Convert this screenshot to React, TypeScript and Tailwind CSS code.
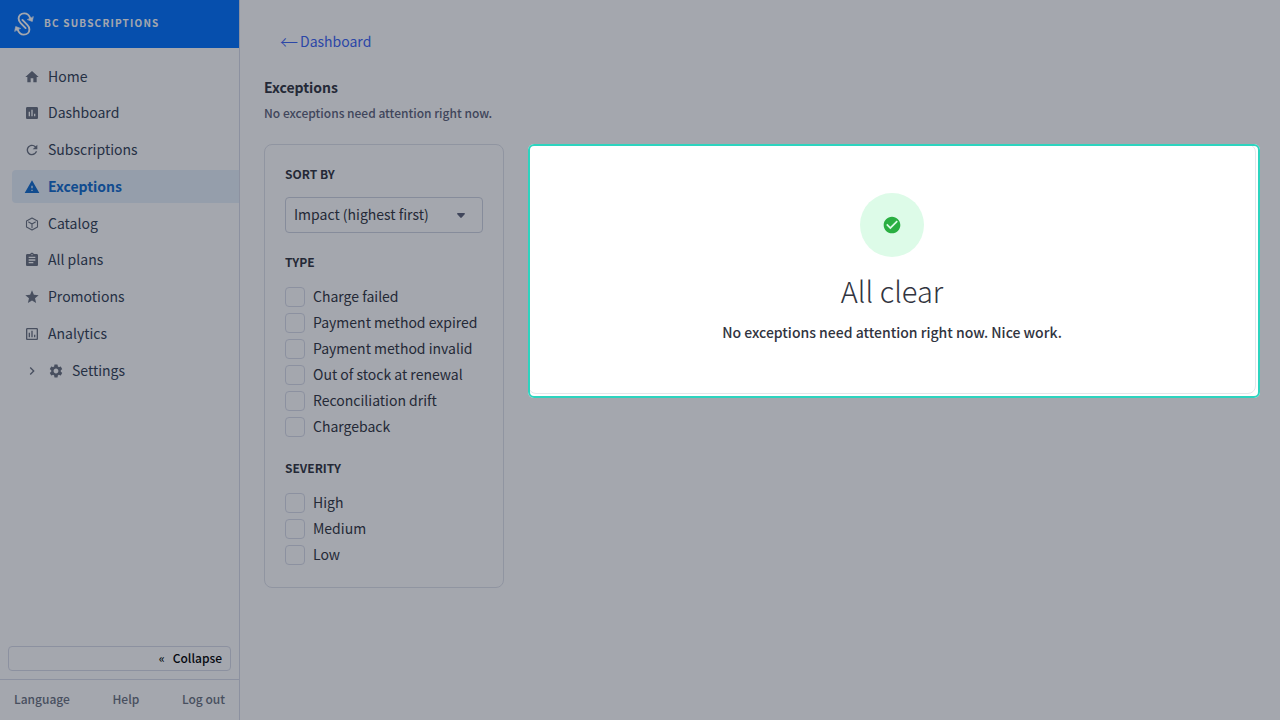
import type { ReactNode } from "react";
import {
  MdAssessment,
  MdAssignment,
  MdCheckCircle,
  MdChevronRight,
  MdHome,
  MdOutlineAssessment,
  MdRefresh,
  MdSettings,
  MdStar,
  MdWarning,
} from "react-icons/md";

function CubeIcon() {
  return (
    <svg viewBox="0 0 16 16" className="size-4" fill="none" stroke="currentColor" strokeWidth="1.100" strokeLinejoin="round" strokeLinecap="round" aria-hidden="true">
      <path d="M8 2 13.500 4.900v6.200L8 14 2.500 11.100V4.900zM4.600 6 8 7.900 11.400 6M8 7.900v3.900" />
    </svg>
  );
}

function CaretIcon() {
  return (
    <svg viewBox="0 0 8 5" className="pointer-events-none absolute top-4 right-[18px] h-[5px] w-2 text-[#5e637a]" fill="currentColor" aria-hidden="true">
      <path d="M.8 0h6.400c.7 0 1 .8.500 1.300L4.700 4.600c-.4.400-1 .4-1.400 0L.3 1.300C-.2.800.1 0 .8 0z" />
    </svg>
  );
}

function Logo() {
  return (
    <svg viewBox="0 0 24 28" className="h-7 w-6" fill="none" stroke="currentColor" strokeWidth="1.900" strokeLinecap="round" strokeLinejoin="round" aria-hidden="true">
      <path d="M18.300 8.500C17.300 5.200 15 3.400 12.200 3.400 8.900 3.400 6.600 5.700 6.600 8.600c0 2 .8 3.200 2.100 4.500l4.900 5" />
      <path d="M5.700 19.500C6.700 22.800 9 24.600 11.800 24.600c3.300 0 5.600-2.300 5.600-5.200 0-2-.8-3.200-2.100-4.500l-4.900-5" />
      <path d="m21.300 6.900-1 4.600-4.700-1.800zM2.700 21.100l1-4.600 4.700 1.800z" fill="currentColor" strokeWidth=".6" />
    </svg>
  );
}

type NavEntry = { label: string; icon: ReactNode; active?: boolean; nested?: boolean };

const nav: NavEntry[] = [
  { label: "Home", icon: <MdHome className="size-4" /> },
  { label: "Dashboard", icon: <MdAssessment className="size-4" /> },
  { label: "Subscriptions", icon: <MdRefresh className="size-4" /> },
  { label: "Exceptions", icon: <MdWarning className="size-4" />, active: true },
  { label: "Catalog", icon: <CubeIcon /> },
  { label: "All plans", icon: <MdAssignment className="size-4" /> },
  { label: "Promotions", icon: <MdStar className="size-4" /> },
  { label: "Analytics", icon: <MdOutlineAssessment className="size-4" /> },
  { label: "Settings", icon: <MdSettings className="size-4" />, nested: true },
];

const types = [
  "Charge failed",
  "Payment method expired",
  "Payment method invalid",
  "Out of stock at renewal",
  "Reconciliation drift",
  "Chargeback",
];
const severities = ["High", "Medium", "Low"];

function CheckGroup({ title, options }: { title: string; options: string[] }) {
  return (
    <fieldset className="pb-0.5">
      <legend className="pb-0.5 text-xs leading-[18px] font-bold uppercase">{title}</legend>
      <div className="mt-3.5 flex flex-col gap-1.5">
        {options.map((option) => (
          <label key={option} className="flex items-center gap-2 text-sm leading-[18px] whitespace-nowrap">
            <input type="checkbox" className="size-5 shrink-0 appearance-none rounded border border-[#d9dce9] bg-white checked:bg-[#3c64f4]" />
            <span className="pb-0.5">{option}</span>
          </label>
        ))}
      </div>
    </fieldset>
  );
}

export default function App() {
  return (
    <div className="flex min-h-screen overflow-hidden bg-white font-['Noto_Sans_CJK_SC',sans-serif] text-[#313440]">
      <aside className="flex w-60 shrink-0 flex-col border-r border-[#d9dce9]">
        <header className="flex h-12 items-center gap-2 bg-[#0071fd] px-3 text-white">
          <Logo />
          <span className="pb-0.5 text-[10px] leading-4 font-bold tracking-[0.12em]">BC SUBSCRIPTIONS</span>
        </header>
        <nav className="flex h-[339px] flex-col justify-between pt-3 pl-3">
          {nav.map(({ label, icon, active, nested }) => (
            <a
              key={label}
              href="#"
              className={
                active
                  ? "flex h-[33px] items-center gap-2 rounded-l bg-[#e7f1fb] px-3 text-sm font-bold text-[#126cce]"
                  : "flex h-[33px] items-center gap-2 rounded-l px-3 text-sm text-[#334155]"
              }
            >
              {nested && <MdChevronRight className="size-4 text-[#6b7280]" />}
              <span className={active ? "" : "text-[#6b7280]"}>{icon}</span>
              <span className="pb-0.5">{label}</span>
            </a>
          ))}
        </nav>
        <div className="mt-auto p-2">
          <button type="button" className="flex h-[25px] w-full items-center justify-end gap-2 rounded border border-[#d9dce9] px-2 pb-0.5 text-xs leading-5 font-medium text-black">
            <span>«</span>
            Collapse
          </button>
        </div>
        <footer className="flex h-[41px] items-center justify-between border-t border-[#d9dce9] px-3.5 pb-0.5 text-xs font-medium text-[#6b7280]">
          <a href="#">Language</a>
          <a href="#">Help</a>
          <a href="#">Log out</a>
        </footer>
      </aside>

      <main className="min-w-0 grow px-6 pt-6">
        <a href="#" className="inline-flex h-9 items-center gap-0.5 px-4 pb-0.5 text-sm text-[#3c64f4]">
          <span className="text-lg leading-5 font-light">←</span>
          <span>Dashboard</span>
        </a>
        <h1 className="mt-[15px] text-sm leading-6 font-bold">Exceptions</h1>
        <p className="mt-1 text-xs leading-5 font-medium text-[#5e637a]">No exceptions need attention right now.</p>
        <div className="mt-[21px] flex items-start gap-6">
          <section className="flex w-60 shrink-0 flex-col gap-5 rounded-lg border border-[#dfe2ea] p-5">
            <div>
              <label htmlFor="sort" className="block pb-0.5 text-xs leading-[18px] font-bold uppercase">Sort by</label>
              <div className="relative mt-3">
                <select id="sort" className="block h-9 w-full appearance-none rounded border border-[#cfd3e0] bg-white px-2 pb-0.5 text-sm">
                  <option>Impact (highest first)</option>
                </select>
                <CaretIcon />
              </div>
            </div>
            <CheckGroup title="Type" options={types} />
            <CheckGroup title="Severity" options={severities} />
          </section>
          <section className="relative flex min-w-0 grow flex-col items-center rounded-lg border border-[#e5e7eb] px-5 pt-12 pb-[49px] text-center">
            <span className="pointer-events-none absolute -top-px -right-[5px] -bottom-[5px] -left-px rounded-md border-2 border-[#2dd4bf] shadow-[0_0_0_9999px_rgba(15,23,42,0.38)]" />
            <div className="flex size-16 items-center justify-center rounded-full bg-[#ddfbe8]">
              <MdCheckCircle className="size-5 text-[#2aaf42]" />
            </div>
            <h2 className="mt-[15px] text-[29px] leading-9 font-light">All clear</h2>
            <p className="mt-3 text-sm leading-6 font-medium">No exceptions need attention right now. Nice work.</p>
          </section>
        </div>
      </main>
    </div>
  );
}
